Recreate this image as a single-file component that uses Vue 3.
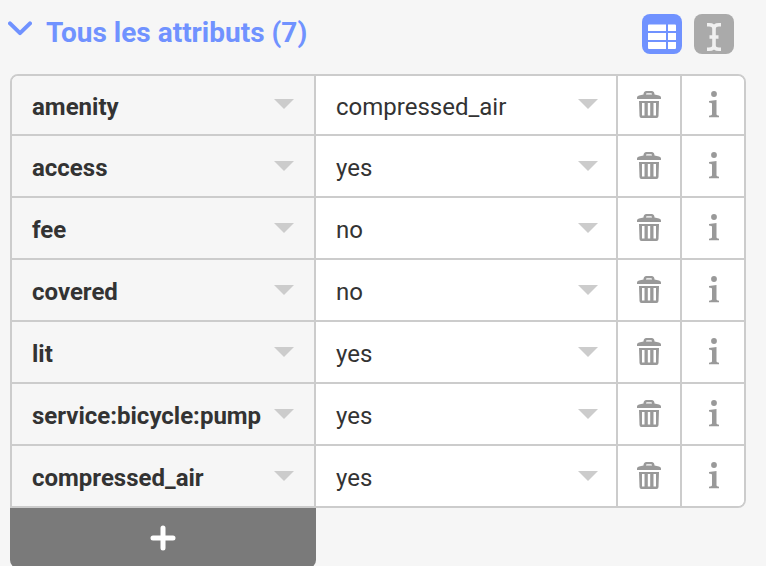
<script setup>
const rows = [
  { key: 'amenity', value: 'compressed_air' },
  { key: 'access', value: 'yes' },
  { key: 'fee', value: 'no' },
  { key: 'covered', value: 'no' },
  { key: 'lit', value: 'yes' },
  { key: 'service:bicycle:pump', value: 'yes' },
  { key: 'compressed_air', value: 'yes' },
]
</script>

<template>
  <section class="panel">
    <header class="head">
      <svg class="chevron" width="24" height="16" viewBox="0 0 24 16">
        <path d="M2 2.300 L12 12.200 L22 2.300" fill="none" stroke="currentColor" stroke-width="4" stroke-linecap="round" stroke-linejoin="round" />
      </svg>
      <h3 class="title">Tous les attributs (7)</h3>
      <button class="view active" type="button">
        <svg width="40" height="40" viewBox="0 0 40 40" fill="#fff">
          <path d="M7 10.5h17v6.500H6v-5.500a1 1 0 0 1 1-1zM26 10.500h7a1 1 0 0 1 1 1v5.500h-8zM6 19h18v7H6zM26 19h8v7h-8zM6 28h18v7H7a1 1 0 0 1-1-1zM26 28h8v6a1 1 0 0 1-1 1h-7z" />
        </svg>
      </button>
      <button class="view" type="button">
        <svg width="40" height="40" viewBox="0 0 40 40" fill="none" stroke="#f0f0f0" stroke-width="3.600">
          <path d="M13 10.700h2q5 0 5 4v16.600q0 4-5 4H13M27 10.700h-2q-5 0-5 4v16.600q0 4 5 4H27M15.500 23h9" />
        </svg>
      </button>
    </header>

    <ul class="list">
      <li v-for="row in rows" :key="row.key" class="row">
        <div class="cell key"><span>{{ row.key }}</span><i class="caret"></i></div>
        <div class="cell value"><span>{{ row.value }}</span><i class="caret"></i></div>
        <button class="cell action" type="button">
          <svg width="24" height="28" viewBox="0 0 24 28" fill="#999">
            <path fill-rule="evenodd" d="M0 8V6.500Q0 5 2 4.500L6.500 3.500Q6.500 0 9.500 0H14.500Q17.500 0 17.500 3.500L22 4.500Q24 5 24 6.500V8ZM9 3.500H15Q15 2.300 14 2.300H10Q9 2.300 9 3.500Z" />
            <path fill-rule="evenodd" d="M2 10H22L21.500 25Q21.500 27 19.500 27H4.500Q2.500 27 2.500 25ZM5 12V24.500H7.500V12ZM10.800 12V24.500H13.200V12ZM16.500 12V24.500H19V12Z" />
          </svg>
        </button>
        <button class="cell action info" type="button">
          <svg width="12" height="28" viewBox="0 0 12 28" fill="#999">
            <circle cx="6" cy="3" r="2.900" />
            <path d="M1 10L8.500 9V23.500Q8.500 24.600 11 24.700V26.300H1V24.700Q4 24.600 4 23.500V13Q4 11.500 1 11.500Z" />
          </svg>
        </button>
      </li>
    </ul>

    <button class="add" type="button">
      <svg width="26" height="26" viewBox="0 0 26 26">
        <path d="M13 3V23M3 13H23" stroke="#fff" stroke-width="5" stroke-linecap="round" />
      </svg>
    </button>
  </section>
</template>

<style>
body { background: #f6f6f6; overflow: hidden; }
</style>

<style scoped>
.panel {
  box-sizing: border-box;
  width: 766px;
  height: 566px;
  overflow: hidden;
  padding: 14px 20px 0 10px;
  background: #f6f6f6;
  color: #333;
  font: 24px/30px Roboto, "Liberation Sans", sans-serif;
}
button { border: 0; padding: 0; margin: 0; font: inherit; display: flex; align-items: center; justify-content: center; }
.head { display: flex; height: 60px; align-items: flex-start; color: #7092ff; padding-right: 12px; }
.chevron { margin: 7px 0 0 -2px; }
.title { margin: 0 auto 0 14px; font-size: 28px; line-height: 38px; font-weight: 700; }
.view { width: 40px; height: 40px; margin-left: 12px; border-radius: 8px; background: #aaa; overflow: hidden; }
.view.active { background: #7092ff; }
.list {
  list-style: none;
  margin: 0;
  padding: 0;
  border: 2px solid #ccc;
  border-radius: 8px 8px 8px 0;
  overflow: hidden;
  background: #fff;
}
.row { display: grid; grid-template-columns: 302px 302px 64px 64px; height: 60px; }
.row + .row { border-top: 2px solid #ccc; }
.row:first-child { height: 58px; }
.cell { display: flex; align-items: center; background: #fff; }
.cell + .cell { border-left: 2px solid #ccc; }
.key, .value { justify-content: space-between; padding: 4px 20px 0; }
.value { padding-right: 18px; }
.key { font-weight: 700; background: #f6f6f6; }
.caret { border: 10px solid transparent; border-top-color: #ccc; border-bottom: 0; margin-bottom: 4px; }
.row:first-child .caret { margin-bottom: 6px; }
.info { padding-left: 2px; }
.add { width: 306px; height: 60px; background: #7a7a7a; border-radius: 0 0 8px 8px; }
</style>
